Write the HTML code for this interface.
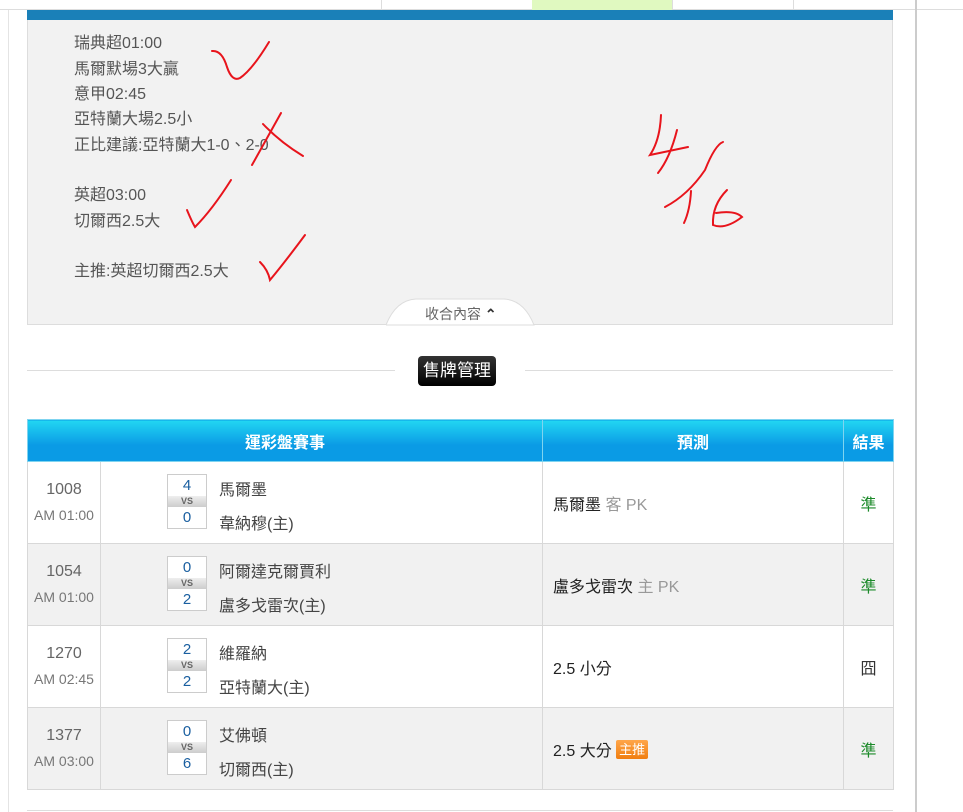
<!DOCTYPE html>
<html><head><meta charset="utf-8"><style>
*{margin:0;padding:0;box-sizing:border-box}
body{width:963px;height:812px;background:#fff;font-family:"Liberation Sans","Noto Sans CJK TC",sans-serif;position:relative;overflow:hidden}
.abs{position:absolute}
.txt{position:absolute;left:74px;font-size:16px;color:#555;line-height:20px}
table{position:absolute;left:27px;top:419px;width:866px;border-collapse:collapse;font-size:16px;table-layout:fixed}
th{background:linear-gradient(#22d6f2,#0a9be5 60%);color:#fff;height:42px;border:1px solid #7fd4f0;font-weight:bold;font-size:16px}
td{border:1px solid #d8d8d8;height:82px;vertical-align:middle}
tr.g td{background:#f1f1f1}
.id{text-align:center;color:#666}
.id b{display:block;font-weight:normal;font-size:16px;margin-bottom:8px}
.id i{font-style:normal;font-size:14px;color:#777}
.m{position:relative}
.sb{position:absolute;left:66px;top:12px;width:40px;height:55px;border:1px solid #ccc;background:#fff}
.sb div{height:21px;text-align:center;color:#1a5fa0;font-size:15px;line-height:21px}
.sb .vs{height:11px;background:linear-gradient(#eee,#ccc);font-size:9px;line-height:11px;color:#666;font-weight:bold}
.n1,.n2{position:absolute;left:118px;color:#444;font-size:16px;white-space:nowrap}
.n1{top:14px}.n2{top:48px}
.p{padding-left:10px;color:#222;white-space:nowrap}
.p span{color:#999}
.r{text-align:center;color:#1c8a2a}
.p .tag{display:inline-block;background:linear-gradient(#ffa64a,#f07e10);color:#fff;font-size:13px;padding:0 3px;border-radius:2px;line-height:19px;vertical-align:2px}
</style></head><body>
<div class="abs" style="left:0;top:0;width:963px;height:10px;border-bottom:1px solid #ddd"></div>
<div class="abs" style="left:381px;top:0;width:1px;height:10px;background:#ddd"></div>
<div class="abs" style="left:532px;top:0;width:140px;height:10px;background:#e0f9c0"></div>
<div class="abs" style="left:672px;top:0;width:1px;height:10px;background:#ddd"></div>
<div class="abs" style="left:793px;top:0;width:1px;height:10px;background:#ddd"></div>
<div class="abs" style="left:8px;top:10px;width:1px;height:802px;background:#e4e4e4"></div>
<div class="abs" style="left:915px;top:0;width:2px;height:812px;background:#ccc"></div>
<div class="abs" style="left:27px;top:10px;width:866px;height:10px;background:#1a80b8"></div>
<div class="abs" style="left:27px;top:20px;width:866px;height:305px;background:#f2f2f2;border:1px solid #ddd;border-top:none"></div>
<div class="txt" style="top:34px">瑞典超01:00</div>
<div class="txt" style="top:60px">馬爾默場3大贏</div>
<div class="txt" style="top:85px">意甲02:45</div>
<div class="txt" style="top:110px">亞特蘭大場2.5小</div>
<div class="txt" style="top:136px">正比建議:亞特蘭大1-0、2-0</div>
<div class="txt" style="top:186px">英超03:00</div>
<div class="txt" style="top:212px">切爾西2.5大</div>
<div class="txt" style="top:262px">主推:英超切爾西2.5大</div>
<svg class="abs" style="left:386px;top:298px" width="150" height="28"><path d="M0 27 Q10 2 30 1 L118 1 Q138 2 148 27 Z" fill="#fff" stroke="#ddd"/></svg>
<div class="abs" style="left:425px;top:304px;font-size:14px;color:#666">收合內容 <b style="color:#333">⌃</b></div>
<div class="abs" style="left:27px;top:370px;width:368px;height:1px;background:#ddd"></div>
<div class="abs" style="left:525px;top:370px;width:368px;height:1px;background:#ddd"></div>
<div class="abs" style="left:418px;top:356px;width:78px;height:30px;background:linear-gradient(#333,#000);border-radius:4px;color:#fff;font-size:17px;text-align:center;line-height:30px">售牌管理</div>
<table>
<colgroup><col style="width:73px"><col style="width:442px"><col style="width:301px"><col style="width:50px"></colgroup>
<tr><th colspan="2">運彩盤賽事</th><th>預測</th><th>結果</th></tr>
<tr><td class="id"><b>1008</b><i>AM 01:00</i></td><td class="m"><div class="sb"><div>4</div><div class="vs">VS</div><div>0</div></div><div class="n1">馬爾墨</div><div class="n2">韋納穆(主)</div></td><td class="p">馬爾墨 <span>客 PK</span></td><td class="r">準</td></tr>
<tr class="g"><td class="id"><b>1054</b><i>AM 01:00</i></td><td class="m"><div class="sb"><div>0</div><div class="vs">VS</div><div>2</div></div><div class="n1">阿爾達克爾賈利</div><div class="n2">盧多戈雷次(主)</div></td><td class="p">盧多戈雷次 <span>主 PK</span></td><td class="r">準</td></tr>
<tr><td class="id"><b>1270</b><i>AM 02:45</i></td><td class="m"><div class="sb"><div>2</div><div class="vs">VS</div><div>2</div></div><div class="n1">維羅納</div><div class="n2">亞特蘭大(主)</div></td><td class="p">2.5 小分</td><td class="r" style="color:#333">囧</td></tr>
<tr class="g"><td class="id"><b>1377</b><i>AM 03:00</i></td><td class="m"><div class="sb"><div>0</div><div class="vs">VS</div><div>6</div></div><div class="n1">艾佛頓</div><div class="n2">切爾西(主)</div></td><td class="p">2.5 大分 <span class="tag">主推</span></td><td class="r">準</td></tr>
</table>
<div class="abs" style="left:27px;top:810px;width:866px;height:1px;background:#ddd"></div>
<svg class="abs" style="left:0;top:0" width="963" height="812" fill="none" stroke="#e8141c" stroke-width="2" stroke-linecap="round">
<path d="M212 51 Q222 50 227 67 Q232 82 240 78 Q252 70 269 42"/>
<path d="M263 124 Q280 142 303 156"/>
<path d="M281 113 Q266 140 252 165"/>
<path d="M187 210 Q192 222 195 227 Q212 210 231 180"/>
<path d="M260 262 Q268 270 270 280 Q285 262 305 235"/>
<path d="M661 115 Q660 140 650 155 L688 147"/>
<path d="M677 130 Q670 158 658 173"/>
<path d="M723 142 Q715 145 705 170 Q688 195 665 207"/>
<path d="M691 191 Q690 210 684 223"/>
<path d="M727 190 Q712 205 713 225 Q725 230 742 217 Q735 210 716 213"/>
</svg>
</body></html>
